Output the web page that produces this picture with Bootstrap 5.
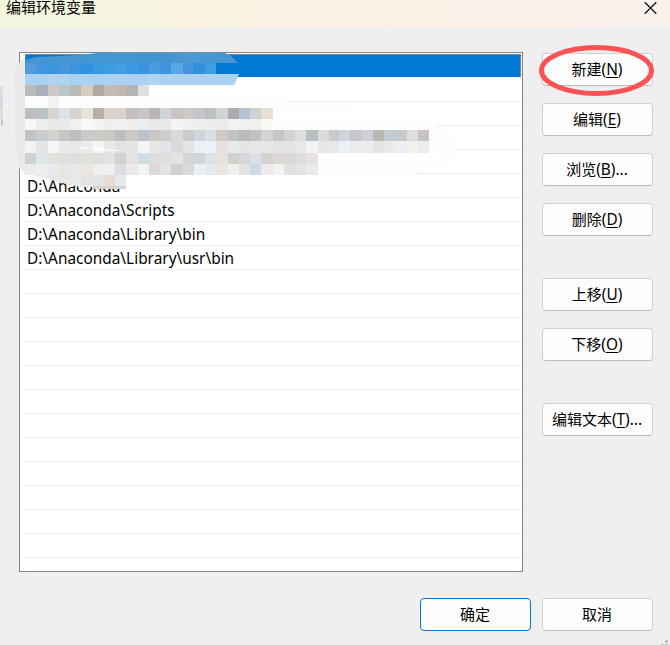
<!DOCTYPE html>
<html lang="zh-CN">
<head>
<meta charset="utf-8">
<meta name="viewport" content="width=device-width, initial-scale=1">
<title>编辑环境变量</title>
<link href="https://cdn.jsdelivr.net/npm/bootstrap@5.3.0/dist/css/bootstrap.min.css" rel="stylesheet">
<style>
body{background:#efefef;color:#000;font-family:"Noto Sans","Noto Sans CJK SC",sans-serif;font-size:15px;line-height:22px}
.dialog-window{width:670px;height:645px}
.title-strip{height:27px;padding:0 13px 10px 6px;background:linear-gradient(90deg,#f2f7de 0,#f8f3df 25%,#faf1e4 50%,#f9f0ea 80%,#f9f1ec 100%);font-family:"Noto Sans CJK SC",sans-serif}
.title-strip span{line-height:14px}
.dialog-main{padding:25px 17px 0 19px;gap:19px}
.path-list{width:504px;height:520px;border:1px solid #7f838e;background:#fff;padding:1px}
.path-item{height:24px;border-bottom:1px solid #efefef;padding:1px 0 0 6px;line-height:24px;white-space:pre;font-size:15.4px}
.path-item.selected{height:23px;background:#0078d4;margin:0 0 0 4px;border:1px dotted #f08a36;border-bottom:0}
.path-item.selected + .path-item{height:25px;border-top:1px solid #eef3f6}
.path-item span{display:inline-block}
.side-buttons{width:111px;padding-top:1px;gap:17px}
.dialog-btn{--bs-btn-padding-x:0;--bs-btn-padding-y:0;--bs-btn-font-size:15px;--bs-btn-line-height:29px;--bs-btn-border-radius:4px;--bs-btn-color:#000;--bs-btn-bg:#fdfdfd;--bs-btn-border-color:#d0d0d0;width:111px;height:33px;padding:0 1px 2px 0;border-bottom-color:#bbb;font-family:"Noto Sans CJK SC",sans-serif}
.dialog-btn.default{--bs-btn-border-color:#0078d4;border-bottom-color:#0078d4}
.dialog-btn span{font-family:"Noto Sans",sans-serif;font-size:15.4px}
.dialog-btn u{text-underline-offset:2px;text-decoration-thickness:1px;text-decoration-skip-ink:none}
.group-gap{margin-top:25px}
.dialog-footer{padding:26px 17px 0 0;gap:11px}
.overlay{left:0;top:0;pointer-events:none}
</style>
<script src="https://cdn.jsdelivr.net/npm/bootstrap@5.3.0/dist/js/bootstrap.bundle.min.js"></script>
</head>
<body class="overflow-hidden">
<div class="dialog-window position-relative overflow-hidden">
  <header class="title-strip d-flex justify-content-between align-items-start">
    <span>编辑环境变量</span>
    <svg width="13" height="17" viewBox="0 0 13 17"><path d="M.7 2.2 12.3 13.8M12.3 2.2.7 13.8" stroke="#111" stroke-width="1.3"/></svg>
  </header>
  <main class="dialog-main d-flex">
    <div class="path-list overflow-hidden" id="paths">
      <div class="path-item selected"></div>
      <div class="path-item"></div><div class="path-item"></div><div class="path-item"></div><div class="path-item"></div>
      <div class="path-item"><span>D:\Anaconda</span></div>
      <div class="path-item"><span>D:\Anaconda\Scripts</span></div>
      <div class="path-item"><span>D:\Anaconda\Library\bin</span></div>
      <div class="path-item"><span>D:\Anaconda\Library\usr\bin</span></div>
      <div class="path-item"></div><div class="path-item"></div><div class="path-item"></div><div class="path-item"></div>
      <div class="path-item"></div><div class="path-item"></div><div class="path-item"></div><div class="path-item"></div>
      <div class="path-item"></div><div class="path-item"></div><div class="path-item"></div><div class="path-item"></div>
    </div>
    <div class="side-buttons d-flex flex-column">
      <button class="btn dialog-btn">新建<span>(<u>N</u>)</span></button>
      <button class="btn dialog-btn">编辑<span>(<u>E</u>)</span></button>
      <button class="btn dialog-btn">浏览<span>(<u>B</u>)...</span></button>
      <button class="btn dialog-btn">删除<span>(<u>D</u>)</span></button>
      <button class="btn dialog-btn group-gap">上移<span>(<u>U</u>)</span></button>
      <button class="btn dialog-btn">下移<span>(<u>O</u>)</span></button>
      <button class="btn dialog-btn group-gap">编辑文本<span>(<u>T</u>)...</span></button>
    </div>
  </main>
  <footer class="dialog-footer d-flex justify-content-end">
    <button class="btn dialog-btn default">确定</button>
    <button class="btn dialog-btn">取消</button>
  </footer>
  <svg class="overlay position-absolute" width="670" height="645" viewBox="0 0 670 645">
    <!-- brushed area over the private entries -->
    <path d="M25 79H236V96H270L290 102 318 104 372 107V119H425L438 126 454 141V152L446 164 413 174H300L126 175H25Z" fill="#fdfdfd"/>
    <path d="M149 86H290V96H149ZM273 108H372V118H273ZM318 154H446V163H318Z" fill="#fff"/>
    <path d="M25 57Q19 61 16 70L14 80V140L17 152 19 168 24 172 40 177 62 183 80 187H93V170L25 162Z" fill="#e9e9ea"/>
    <path d="M15 84V140L18 152 16 146 14 138V84Z" fill="#efefef"/>
    <path d="M25 60 36 57 60 56 88 54 106 52H222L230 55 238 63H25Z" fill="#4595d2"/>
    <path d="M106 52.500H222" stroke="#7395aa"/>
    <path d="M25 74H239L237 79 234 85H25Z" fill="#aad1f1"/>
    <g id="mosaic" shape-rendering="crispEdges"></g>
    <path d="M78 148 88 147.700 104 148.400M93 150 106 149.800 118 150.600" stroke="#fff" fill="none"/>
    <g shape-rendering="crispEdges"><path d="M0 86h3v10H0z" fill="#dfdfe0"/><path d="M0 96h3v12H0z" fill="#d4dae0"/><path d="M0 108h3v11H0z" fill="#dfdfdf"/><path d="M1 119h2v7H1z" fill="#c4c6ce"/></g>
    <!-- highlight ring and resize grip -->
    <ellipse cx="596.500" cy="70.500" rx="55" ry="23" fill="none" stroke="#fb5353" stroke-width="5"/>
    <path d="M665 640h3v3h-3zM661 644h3v1h-3zM665 644h3v1h-3z" fill="#bdbdbd" shape-rendering="crispEdges"/>
  </svg>
</div>
<script>
const tiles=[
 {y:53,h:10,from:8,c:'4696d2 4595d2 4294d2 4294d2 4395d2 4896d2 4e99d4 4c98d4 4797d3'},
 {y:63,h:11,c:'539bd8 4295e0 3a95df 4a96dc 3b94df 3092e0 3a9be1 3c9be1 439de1 3c9ae0 3b93df 4b9cdf 4092df 5ba7e3 4693da 328fdb 3f9de2'},
 {y:74,h:11,from:2,c:'b0d4f0 b0d4f0'},
 {y:74,h:11,from:11,c:'b0d5f2'},
 {y:85,h:11,c:'bbbab6 a9b0b9 d0c7c1 b7c5cd b9bab4 d5cdc2 b0a8a3 c5bbb2 c1b7ad b4b4b4 dedfe0'},
 {y:96,h:12,c:'fdfdfd fdfdfd f2f4f3 fdfdfd'},
 {y:108,h:11,c:'bebdbc bac4c8 d9d5cf dae4ea d2d3d2 e8e4da b9aeab dbd1c9 dad3cd c4bfbd c9c7c5 bcb5b5 cfd2d6 c9c4c1 cdcac3 c4c7ca bbc0c3 d0d3d2 aaabaf b5c3d5 d0d3d5 e7e0d5'},
 {y:119,h:11,c:'f8f7f5 ededec e9e9e9 ebeaeb f1f0ee f9f9f7 f4f4f3 efeff0 f1efef f0eeeb eaeff1 ebe9e7 e8e8e8 f4f4f2 f0f0f0 eeeeed ececec ebebeb f3f3f1 eef1f4 f0f0ee f9f8f4'},
 {y:130,h:11,c:'c3c3c3 c6ccd0 d4d1ca c7c6c8 bdbfb9 cbcbcb d0ccc5 c9cac4 bcbdc5 cacaca bac3cb cac8c7 cfcccc dadad8 c9c9d0 cfd4dd d8dfe8 cfcac4 c2c2c1 bdb9b5 c3c2c0 d2d3d5 c4c5c7 d1d2d4 dfe0db b9c0c3 dcdbd9 cccac8 cfd5df c4c8ce cdd1d7 bdb7b3 c3cbd4 c6cacd dededd c9c4c3'},
 {y:141,h:12,c:'f3f3f1 e4e5e8 f3f7f6 e9e9e9 e8e8e5 edebe7 f4f6f4 e7e8e4 e2e2e5 e6e5e4 f3f5f7 e8e7e3 e1e4e9 dadad8 e4e4e7 eaf0f4 edf2f6 e5e1e0 e8e9eb e5e5e3 e4e6e8 e7e7e8 e3e3e3 e6e4e2 e8e8e8 f1f3f6 e5e7e9 e7e9ed ebf1f6 ebecee eaecee e7e5e2 ebeae6 edf0f2 f2f1ec eaecef'},
 {y:153,h:11,c:'cdd3d5 e0e7ea e2e2dd e1e0e0 dedfdd e0e2dc dbe1dd e1e1e0 d0d0d5 e4e3e4 d2dce4 dcdddd dfdfdd e4e4e2 d6d5da ced6da dfe3e4 e6e2dc d1d1d0 d7d6da d9e0e6 d3d3d2 ddd8d4 d7d9db e0dcd8 e8e1e1'},
 {y:164,h:11,c:'ececeb ededed e7ebee e8e5e0 e8e8eb ebe7e1 ebf1ef f0efef dddde4 ebe9e8 f0f4f5 ded9d6 e1e3e8 d1d1d0 d8d8df eaf1f6 e4e9f1 ebe4e2 f1f0ed e2e2e3 cfd9e4 ebebec f4f3ef e3e0df e3e4e6 e8eaec'},
 {y:175,h:5,from:3,c:'e8e5e2 e7e7ea'},
 {y:175,h:10,from:5,c:'e3e2e2'},
 {y:175,h:13,from:6,c:'e4e4e4 e6ddd7 e8e9eb'},
 {y:186,h:3,from:6,c:'d7d4cc dcd3cc d6d5dd'}
];
const g=document.getElementById('mosaic');
const edge=k=>Math.round(25+k*11.25)-(k>27?1:0);
tiles.forEach(r=>r.c.split(' ').forEach((c,i)=>{
  const k=i+(r.from||0),x=edge(k);
  const e=document.createElementNS('http://www.w3.org/2000/svg','rect');
  e.setAttribute('x',x);e.setAttribute('y',r.y);e.setAttribute('width',edge(k+1)-x);e.setAttribute('height',r.h);e.setAttribute('fill','#'+c);
  g.appendChild(e);
}));
</script>
</body>
</html>
